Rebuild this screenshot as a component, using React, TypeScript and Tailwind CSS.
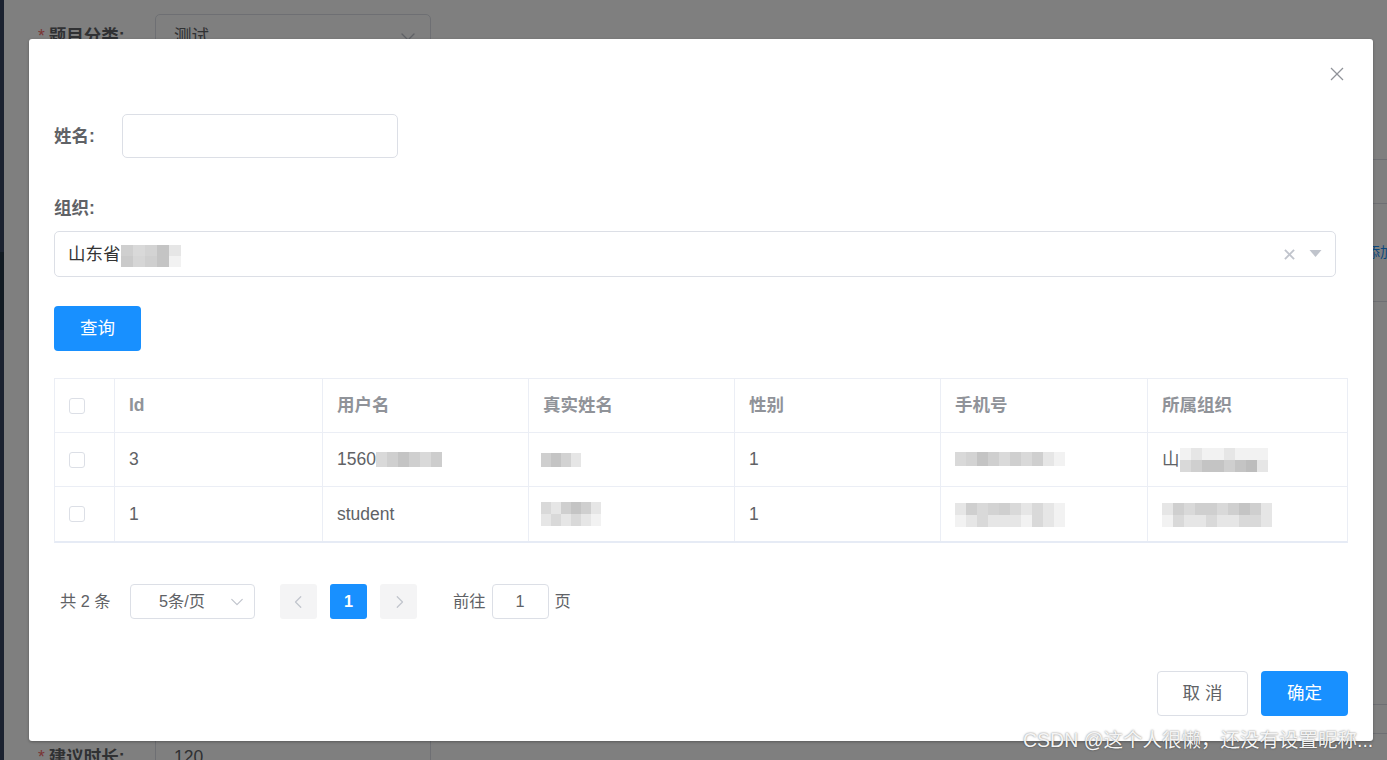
import React from 'react';

type MProps = { rows: string[][]; w: number; h: number; className?: string };
function Mosaic({ rows, w, h, className = '' }: MProps) {
  return (
    <span className={`inline-flex flex-col align-middle ${className}`}>
      {rows.map((r, i) => (
        <span key={i} className="flex">
          {r.map((c, j) => (
            <span key={j} style={{ width: w, height: h, background: c }} />
          ))}
        </span>
      ))}
    </span>
  );
}

function Chevron({ dir, className = '' }: { dir: 'down' | 'left' | 'right'; className?: string }) {
  const pts = dir === 'down' ? '2,5 8,11 14,5' : dir === 'left' ? '10,2 4,8 10,14' : '6,2 12,8 6,14';
  return (
    <svg viewBox="0 0 16 16" className={className} fill="none" stroke="currentColor" strokeWidth="1.4" strokeLinecap="round" strokeLinejoin="round">
      <polyline points={pts} />
    </svg>
  );
}

function Checkbox() {
  return <span className="inline-block w-[16px] h-[16px] border border-[#dcdfe6] rounded-[3px] bg-white" />;
}

const widths = ['w-[60px]', 'w-[208px]', 'w-[206px]', 'w-[206px]', 'w-[206px]', 'w-[207px]', 'flex-1'];

function Row({ cells, header = false, last = false }: { cells: React.ReactNode[]; header?: boolean; last?: boolean }) {
  return (
    <div className={`flex h-[54px] ${last ? '' : 'border-b border-[#ebeef5]'}`}>
      {cells.map((c, i) => (
        <div
          key={i}
          className={`${widths[i]} flex items-center pl-[14px] ${i < 6 ? 'border-r border-[#ebeef5]' : ''} ${
            header ? 'font-bold text-[#909399]' : 'text-[#606266]'
          } text-[17.5px] whitespace-nowrap overflow-hidden`}
        >
          {c}
        </div>
      ))}
    </div>
  );
}

const g1 = '#cfcfcf';
const g2 = '#d9d9d9';
const g3 = '#c4c4c4';
const g4 = '#e6e6e6';
const g5 = '#f2f2f2';
const g6 = '#bdbdbd';

export default function App() {
  return (
    <div className="relative w-[1387px] h-[760px] overflow-hidden bg-white font-['Liberation_Sans','Noto_Sans_CJK_SC',sans-serif]">
      {/* background page */}
      <div className="flex h-full">
        <div className="w-[4px] flex flex-col bg-[#364461]">
          <div className="h-[252px]" />
          <div className="h-[78px] bg-[#223445]" />
        </div>
        <div className="flex-1 flex">
          <div className="flex-1 flex flex-col pl-[34px] pt-[14px]">
            <div className="flex items-center h-[45px]">
              <div className="w-[117px] text-[17.5px] font-bold text-[#606266]">
                <span className="text-[#f56c6c] mr-[4px] font-normal">*</span>题目分类:
              </div>
              <div className="w-[276px] h-[45px] border border-[#dcdfe6] rounded-[5px] flex items-center justify-between pl-[18px] pr-[14px] text-[17.5px] text-[#606266]">
                <span>测试</span>
                <Chevron dir="down" className="w-[16px] h-[16px] text-[#c0c4cc]" />
              </div>
            </div>
            <div className="flex items-center h-[45px] mt-[676px]">
              <div className="w-[117px] text-[17.5px] font-bold text-[#606266]">
                <span className="text-[#f56c6c] mr-[4px] font-normal">*</span>建议时长:
              </div>
              <div className="w-[276px] h-[45px] border border-[#dcdfe6] rounded-[5px] flex items-center pl-[18px] text-[17.5px] text-[#606266]">
                120
              </div>
            </div>
          </div>
          <div className="w-[14px] flex flex-col">
            <div className="h-[160px] border-b border-[#dcdfe6]" />
            <div className="h-[44px] border-b border-[#dcdfe6]" />
            <div className="h-[98px] border-b border-[#dcdfe6] flex items-center whitespace-nowrap text-[14px] text-[#1890ff] -ml-[7px]">
              添加
            </div>
            <div className="h-[403px] border-b border-[#dcdfe6]" />
            <div className="h-[29px] border-b border-[#dcdfe6]" />
          </div>
        </div>
      </div>
      <div className="absolute inset-0 bg-black/50" />

      {/* dialog */}
      <div className="absolute left-[29px] top-[39px] w-[1344px] h-[702px] bg-white rounded-[3px] shadow-[0_1px_3px_rgba(0,0,0,0.3)] flex flex-col px-[25px] pt-[75px]">
        <button className="absolute right-[29px] top-[28px] w-[14px] h-[14px] text-[#909399]">
          <svg viewBox="0 0 14 14" className="w-[14px] h-[14px]" stroke="currentColor" strokeWidth="1.3" fill="none">
            <line x1="1" y1="1" x2="13" y2="13" />
            <line x1="13" y1="1" x2="1" y2="13" />
          </svg>
        </button>

        <div className="flex items-center h-[44px]">
          <div className="w-[68px] text-[17.5px] font-bold text-[#606266]">姓名:</div>
          <div className="w-[276px] h-[44px] border border-[#dcdfe6] rounded-[5px]" />
        </div>

        <div className="mt-[38px] h-[24px] leading-[24px] text-[17.5px] font-bold text-[#606266]">组织:</div>

        <div className="mt-[11px] w-[1282px] h-[46px] border border-[#dcdfe6] rounded-[5px] flex items-center pl-[13px] pr-[13px]">
          <span className="text-[17.5px] text-[#333333]">山东省</span>
          <Mosaic
            className="mt-[4px]"
            w={12}
            h={11}
            rows={[
              [g1, g2, '#d3d3d3', g3, g4],
              ['#cacaca', '#d6d6d6', g1, g3, g5],
            ]}
          />
          <span className="flex-1" />
          <svg viewBox="0 0 12 12" className="w-[11px] h-[11px] text-[#c0c4cc] mr-[14px]" stroke="currentColor" strokeWidth="2" fill="none">
            <line x1="1" y1="1" x2="11" y2="11" />
            <line x1="11" y1="1" x2="1" y2="11" />
          </svg>
          <svg viewBox="0 0 12 8" className="w-[13px] h-[8px] text-[#c0c4cc]" fill="currentColor">
            <polygon points="0,0 12,0 6,7" />
          </svg>
        </div>

        <button className="mt-[29px] w-[87px] h-[45px] bg-[#1890ff] rounded-[4px] text-white text-[17.5px]">查询</button>

        <div className="mt-[27px] w-[1294px] border border-b-2 border-[#ebeef5] border-b-[#e6ebf5] flex flex-col">
          <Row header cells={[<Checkbox />, 'Id', '用户名', '真实姓名', '性别', '手机号', '所属组织']} />
          <Row
            cells={[
              <Checkbox />,
              '3',
              <>
                <span>1560</span>
                <Mosaic w={11} h={15} rows={[[g2, g1, g3, g1, g2, '#cdcdcd']]} />
              </>,
              <Mosaic w={10} h={14} className="-ml-[2px]" rows={[[g1, g3, '#d2d2d2', g4]]} />,
              '1',
              <Mosaic w={11} h={14} className="mt-[-2px]" rows={[[g2, '#d3d3d3', g3, g1, '#dadada', g1, g2, g1, g4, g5]]} />,
              <>
                <span>山</span>
                <Mosaic w={11} h={12} rows={[[g5, g4, g5, g5, g4, g5, g5, g5], [g2, g1, g3, g3, g1, g3, g6, g4]]} />
              </>,
            ]}
          />
          <Row
            last
            cells={[
              <Checkbox />,
              '1',
              'student',
              <Mosaic w={10} h={12} className="-ml-[2px]" rows={[[g2, g4, g1, g3, g1, g4], [g4, g2, g4, g2, g4, g5]]} />,
              '1',
              <Mosaic w={11} h={12} className="mt-[2px]" rows={[[g4, g1, g2, '#d3d3d3', g1, g2, g4, g2, g4, g5], [g5, g4, g2, g4, g4, g4, g5, g2, g4, g5]]} />,
              <Mosaic w={11} h={12} className="mt-[2px]" rows={[[g4, g1, g2, g1, g1, g2, g1, g3, g1, g4], [g5, g2, g4, g4, g2, g4, g4, g2, g2, g4]]} />,
            ]}
          />
        </div>

        <div className="mt-[41px] h-[35px] flex items-center text-[16.25px] text-[#606266] pl-[6px]">
          <span className="w-[70px]">共 2 条</span>
          <div className="w-[125px] h-[35px] border border-[#dcdfe6] rounded-[4px] flex items-center pl-[28px] pr-[10px]">
            <span className="flex-1">5条/页</span>
            <Chevron dir="down" className="w-[14px] h-[14px] text-[#c0c4cc]" />
          </div>
          <div className="ml-[25px] w-[37px] h-[35px] bg-[#f4f4f5] rounded-[3px] flex items-center justify-center">
            <Chevron dir="left" className="w-[14px] h-[14px] text-[#c0c4cc]" />
          </div>
          <div className="ml-[13px] w-[37px] h-[35px] bg-[#1890ff] rounded-[3px] flex items-center justify-center text-white font-bold">1</div>
          <div className="ml-[13px] w-[37px] h-[35px] bg-[#f4f4f5] rounded-[3px] flex items-center justify-center">
            <Chevron dir="right" className="w-[14px] h-[14px] text-[#c0c4cc]" />
          </div>
          <span className="ml-[36px]">前往</span>
          <div className="ml-[6px] w-[57px] h-[35px] border border-[#dcdfe6] rounded-[4px] flex items-center justify-center">1</div>
          <span className="ml-[6px]">页</span>
        </div>

        <div className="mt-[52px] flex justify-end gap-[13px]">
          <button className="w-[91px] h-[45px] border border-[#dcdfe6] rounded-[4px] bg-white text-[17.5px] text-[#606266]">取 消</button>
          <button className="w-[87px] h-[45px] bg-[#1890ff] rounded-[4px] text-white text-[17.5px]">确定</button>
        </div>
      </div>

      <div className="absolute left-[1023px] top-[726px] text-[19.5px] leading-[28px] text-[#f4f4f4] whitespace-nowrap [text-shadow:0_0_2px_rgba(0,0,0,0.55)]">
        CSDN @这个人很懒，还没有设置昵称...
      </div>
    </div>
  );
}
